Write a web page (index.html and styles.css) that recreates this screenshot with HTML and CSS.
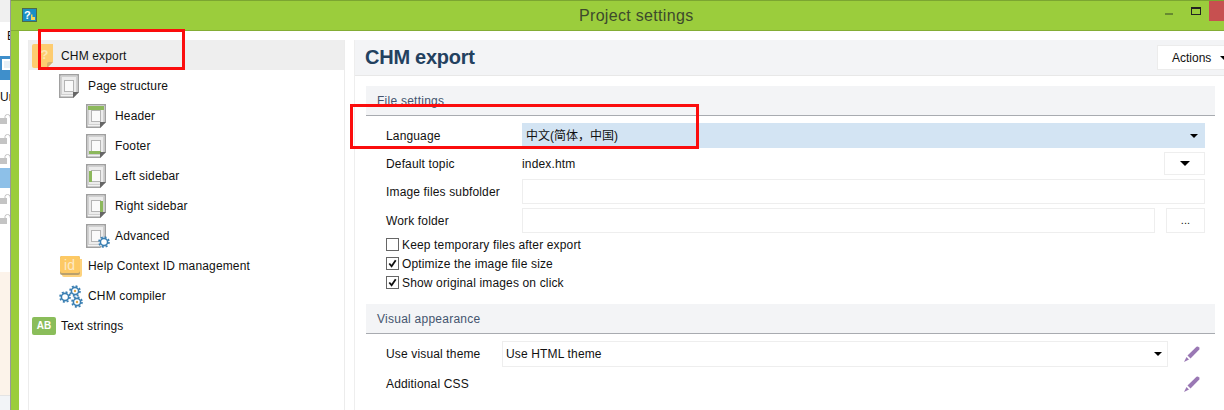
FILE: index.html
```html
<!DOCTYPE html>
<html lang="en">
<head>
<meta charset="utf-8">
<title>Project settings</title>
<link rel="stylesheet" href="styles.css">
</head>
<body>
<svg class="defs" aria-hidden="true">
  <symbol id="page" viewBox="0 0 20 24">
    <path d="M.75.75h18.500V18L14 23.250H.75z" fill="#f2f2f2" stroke="#a0a0a0" stroke-width="1.500"/>
    <rect x="2.500" y="2.500" width="15" height="18" fill="#ececec" stroke="#d0d0d0"/>
    <rect x="5.500" y="6.500" width="9" height="11" fill="#fafafa" stroke="#b4b4b4"/>
  </symbol>
  <symbol id="fold" viewBox="0 0 20 24">
    <path d="M14 24l6-6h-6z" fill="#666"/>
  </symbol>
  <symbol id="gear" viewBox="0 0 12 12">
    <circle cx="6" cy="6" r="5" fill="#fff"/>
    <circle cx="6" cy="6" r="3.600" fill="none" stroke="#3a7fb2" stroke-width="1.600"/>
    <circle cx="6" cy="6" r="5" fill="none" stroke="#3a7fb2" stroke-width="1.600" stroke-dasharray="2 1.930"/>
  </symbol>
  <symbol id="pen" viewBox="0 0 16 16">
    <path d="M3.500 9.500L12.500.8q1.400-.6 2.400.4t.4 2.400L6.500 12.500z" fill="#9a78b4"/>
    <path d="M2.500 11l2.500 2.500-5 2.500z" fill="#9a78b4"/>
  </symbol>
  <symbol id="lock" viewBox="0 0 11 10">
    <rect x="0" y="4" width="7" height="6" fill="#c4c4c4"/>
    <path d="M5 4V2.500Q5 .5 7.500.5T10 2.500V3.500" fill="none" stroke="#c4c4c4"/>
  </symbol>
</svg>

<div class="app">
  <div class="strip">
    <div class="strip-top"></div>
    <div class="strip-e">E</div>
    <div class="strip-blue"><span class="strip-doc"></span></div>
    <div class="strip-un">Un</div>
    <div class="strip-row"><svg class="lock"><use href="#lock"/></svg></div>
    <div class="strip-row"><svg class="lock"><use href="#lock"/></svg></div>
    <div class="strip-row"><svg class="lock"><use href="#lock"/></svg></div>
    <div class="strip-row strip-sel"></div>
    <div class="strip-row"><svg class="lock"><use href="#lock"/></svg></div>
    <div class="strip-row"><svg class="lock"><use href="#lock"/></svg></div>
    <div class="strip-peach"></div>
    <div class="strip-foot"></div>
  </div>

  <div class="window">
    <header class="titlebar">
      <svg class="app-icon" viewBox="0 0 15 14">
        <rect x=".5" y=".5" width="14" height="13" fill="#1b8fc4" stroke="#4d6b4a"/>
        <text x="2" y="10.500" class="app-q">?</text>
        <path d="M9 12V6.500h1.500V9H13v3z" fill="#f6d65a"/>
      </svg>
      <h1 class="title">Project settings</h1>
      <div class="controls">
        <span class="ctl-min"></span>
        <span class="ctl-max"></span>
        <span class="ctl-close"></span>
      </div>
    </header>

    <div class="winbody">
      <nav class="sidebar">
        <div class="item active">
          <span class="icon">
            <svg class="i-note" viewBox="0 0 21 24">
              <path d="M2 0h19v18l-6 6H2q-2 0-2-2V2q0-2 2-2z" fill="#fdcc70"/>
              <path d="M15 24v-4q0-2 2-2h4z" fill="#d4b070"/>
              <text x="8.500" y="15" class="i-q">?</text>
            </svg>
          </span>CHM export
        </div>
        <div class="item lv1">
          <span class="icon"><svg class="i-page" viewBox="0 0 20 24"><use href="#page" width="20" height="24"/><use href="#fold" width="20" height="24"/></svg></span>Page structure
        </div>
        <div class="item lv2">
          <span class="icon"><svg class="i-page" viewBox="0 0 20 24"><use href="#page" width="20" height="24"/><rect x="2" y="2" width="16" height="4" fill="#8cb85c"/><use href="#fold" width="20" height="24"/></svg></span>Header
        </div>
        <div class="item lv2">
          <span class="icon"><svg class="i-page" viewBox="0 0 20 24"><use href="#page" width="20" height="24"/><rect x="3" y="17" width="12" height="3" fill="#8cb85c"/><use href="#fold" width="20" height="24"/></svg></span>Footer
        </div>
        <div class="item lv2">
          <span class="icon"><svg class="i-page" viewBox="0 0 20 24"><use href="#page" width="20" height="24"/><rect x="3" y="7" width="3" height="11" fill="#8cb85c"/><use href="#fold" width="20" height="24"/></svg></span>Left sidebar
        </div>
        <div class="item lv2">
          <span class="icon"><svg class="i-page" viewBox="0 0 20 24"><use href="#page" width="20" height="24"/><rect x="14" y="7" width="3" height="11" fill="#8cb85c"/><use href="#fold" width="20" height="24"/></svg></span>Right sidebar
        </div>
        <div class="item lv2">
          <span class="icon"><svg class="i-page i-over" viewBox="0 0 20 24"><use href="#page" width="20" height="24"/><use href="#gear" x="12" y="12" width="12" height="12"/></svg></span>Advanced
        </div>
        <div class="item lv1">
          <span class="icon">
            <svg class="i-id" viewBox="0 0 22 21">
              <path d="M2 3h20v16q0 2-2 2H4q-2 0-2-2z" fill="#fdd27d"/>
              <path d="M2 0h16q2 0 2 2v15q0 2-2 2H2q-2 0-2-2V2q0-2 2-2z" fill="#b9a06c"/>
              <path d="M2 0h16q2 0 2 2v13q0 2-2 2H2q-2 0-2-2V2q0-2 2-2z" fill="#fdc964"/>
              <text x="4" y="14" class="i-idt">id</text>
            </svg>
          </span>Help Context ID management
        </div>
        <div class="item lv1">
          <span class="icon">
            <svg class="i-gears" viewBox="0 0 24 24">
              <use href="#gear" x="0" y="7" width="12" height="12"/>
              <use href="#gear" x="10" y="1" width="12" height="12"/>
              <use href="#gear" x="12" y="12" width="12" height="12"/>
              <circle cx="16" cy="7" r="1.200" fill="#e0a848"/>
              <circle cx="18" cy="18" r="1.200" fill="#e0a848"/>
            </svg>
          </span>CHM compiler
        </div>
        <div class="item">
          <span class="icon">
            <span class="i-ab">AB</span>
          </span>Text strings
        </div>
      </nav>

      <main class="main">
        <div class="main-head">
          <h2 class="heading">CHM export</h2>
          <div class="actions">Actions<span class="caret"></span></div>
        </div>

        <section class="section first">
          <h3 class="section-head">File settings</h3>
          <div class="form">
            <div class="row">
              <label class="label">Language</label>
              <div class="lang-value">中文(简体，中国)<span class="caret"></span></div>
            </div>
            <div class="row r-topic">
              <label class="label">Default topic</label>
              <span class="plain">index.htm</span>
              <span class="btn btn-drop"><span class="caret caret-lg"></span></span>
            </div>
            <div class="row">
              <label class="label">Image files subfolder</label>
              <span class="input"></span>
            </div>
            <div class="row">
              <label class="label">Work folder</label>
              <span class="input"></span>
              <span class="btn btn-more">...</span>
            </div>
          </div>
          <div class="checks">
            <div class="check"><span class="box"></span>Keep temporary files after export</div>
            <div class="check"><span class="box on"><svg viewBox="0 0 12 12"><path d="M2.500 6l2.500 3 4.500-6.500" fill="none" stroke="#111" stroke-width="2"/></svg></span>Optimize the image file size</div>
            <div class="check"><span class="box on"><svg viewBox="0 0 12 12"><path d="M2.500 6l2.500 3 4.500-6.500" fill="none" stroke="#111" stroke-width="2"/></svg></span>Show original images on click</div>
          </div>
        </section>

        <section class="section">
          <h3 class="section-head">Visual appearance</h3>
          <div class="form form-visual">
            <div class="row r-theme">
              <label class="label label-sm">Use visual theme</label>
              <div class="select">Use HTML theme<span class="caret"></span></div>
              <svg class="pen"><use href="#pen"/></svg>
            </div>
            <div class="row r-css">
              <label class="label">Additional CSS</label>
              <svg class="pen pen-end"><use href="#pen"/></svg>
            </div>
          </div>
        </section>
      </main>
    </div>
  </div>

  <div class="mark mark-a"></div>
  <div class="mark mark-b"></div>
</div>
</body>
</html>
```

FILE: styles.css
```css
* { box-sizing: border-box; }
html, body { margin: 0; padding: 0; height: 410px; overflow: hidden; }
body { font: 12px/1.2 "Liberation Sans", "Noto Sans CJK SC", sans-serif; letter-spacing: .15px; color: #111; background: #fff; }
h1, h2, h3 { margin: 0; font-weight: normal; }
.defs { position: absolute; width: 0; height: 0; }

.app { position: relative; display: flex; width: 1224px; height: 410px; overflow: hidden; }

/* background window peeking out on the left */
.strip { flex: none; width: 11px; height: 410px; overflow: hidden; display: flex; flex-direction: column; background: #fff; border-right: 1px solid #999; letter-spacing: 0; }
.strip-top { height: 22px; background: #f0f0f0; }
.strip-e { height: 28px; line-height: 28px; padding-left: 7px; font-size: 12px; margin-bottom: 6px; }
.strip-blue { height: 24px; background: #3f8fcb; padding: 3px 0 0 2px; }
.strip-doc { display: block; width: 12px; height: 11px; background: #e8f0f6; border: 2px solid #fff; }
.strip-un { height: 28px; line-height: 34px; font-size: 12px; white-space: nowrap; }
.strip-row { flex: none; height: 20px; padding-top: 6px; }
.strip-sel { background: #8dc0e8; }
.lock { display: block; width: 11px; height: 10px; }
.strip-peach { height: 123px; margin-top: auto; flex: none; background: #fcf3ea; }
.strip-foot { height: 15px; flex: none; background: #f2f4f7; border-top: 1px solid #e4e4e4; }

/* window */
.window { flex: none; width: 1213px; display: flex; flex-direction: column; }
.titlebar { flex: none; height: 31px; display: flex; align-items: flex-start; background: #9bcd3c; border-top: 1px solid #7ba531; border-bottom: 1px solid #84ad35; }
.app-icon { flex: none; width: 15px; height: 14px; margin: 7px 0 0 11px; }
.app-q { font: bold 11px "Liberation Sans", sans-serif; fill: #fff; }
.title { flex: none; width: 114px; margin: 7px 0 0 542px; font-size: 16px; line-height: 16px; letter-spacing: .32px; white-space: nowrap; color: #3d4a2c; }
.controls { margin-left: auto; display: flex; align-items: flex-start; }
.ctl-min { width: 8px; height: 2px; margin: 12px 18px 0 0; background: #678a30; }
.ctl-max { width: 10px; height: 8px; margin: 6px 8px 0 0; border: 1px solid #222; border-top-width: 2px; }
.ctl-close { width: 15px; height: 20px; background: #c75050; }

.winbody { flex: 1; min-height: 0; display: flex; background: #fff; border-left: 8px solid #9bcd3c; padding: 9px 0 0 9px; }

/* tree */
.sidebar { flex: none; width: 317px; border: 1px solid #ececec; border-width: 0 1px; }
.item { height: 30px; display: flex; align-items: center; padding: 2px 0 0 3px; white-space: nowrap; }
.item.active { background: #eeeeee; }
.item.lv1 { padding-left: 30px; }
.item.lv2 { padding-left: 57px; }
.icon { flex: none; width: 29px; display: flex; align-items: center; }
.i-note { width: 21px; height: 24px; }
.i-q { font: bold 13px "Liberation Sans", sans-serif; fill: #fde6b4; }
.i-page { display: block; width: 20px; height: 24px; }
.i-over { overflow: visible; }
.i-id { width: 22px; height: 21px; margin-left: 1px; }
.i-idt { font: 14px "Liberation Sans", sans-serif; fill: #fdeac4; }
.i-gears { width: 24px; height: 24px; }
.i-ab { display: block; width: 24px; height: 18px; line-height: 18px; text-align: center; background: #8abd5a; color: #fff; font-weight: bold; font-size: 10px; letter-spacing: 0; border-radius: 2px; }

/* main */
.main { flex: 1; min-width: 0; margin-left: 9px; border-left: 1px solid #eee; }
.main-head { height: 36px; display: flex; align-items: flex-start; background: #f3f4f6; border-bottom: 1px solid #e8e8e8; padding-left: 10px; }
.heading { font-size: 20px; line-height: 35px; font-weight: bold; color: #23415f; letter-spacing: -.25px; }
.actions { flex: none; margin: 5px 0 0 auto; width: 67px; height: 25px; line-height: 24px; padding-left: 14px; background: #fff; border: 1px solid #ececec; border-right: 0; white-space: nowrap; display: flex; align-items: center; letter-spacing: 0; }
.actions .caret { margin-left: 9px; }

.section { margin: 0 9px 0 11px; }
.section.first { margin-top: 10px; }
.section-head { height: 30px; line-height: 31px; padding-left: 11px; font-size: 12px; color: #44546e; background: #f3f4f6; border-bottom: 1px solid #a8abb0; letter-spacing: .25px; }

.form { padding: 7px 10px 0 20px; display: flex; flex-direction: column; gap: 4px; }
.row { height: 25px; display: flex; align-items: center; }
.r-topic { height: 23px; }
.label { flex: none; width: 136px; white-space: nowrap; }
.first .label, .first .plain { padding-top: 2px; }
.label-sm { width: 116px; }
.lang-value { flex: 1; height: 25px; display: flex; align-items: center; padding: 2px 0 0 4px; background: #d3e4f3; letter-spacing: 0; }
.lang-value .caret { margin: -2px 7px 0 auto; }
.plain { flex: 1; }
.input { flex: 1; height: 25px; border: 1px solid #eee; background: #fff; }
.btn { flex: none; display: flex; align-items: center; justify-content: center; border: 1px solid #eee; background: #fff; }
.btn-drop { width: 41px; height: 23px; }
.btn-more { width: 39px; height: 25px; margin-left: 11px; font-size: 11px; }
.caret { display: block; flex: none; width: 0; height: 0; border: 4px solid transparent; border-bottom: 0; border-top: 4px solid #000; }
.caret-lg { border-width: 5px 5px 0; }

.checks { margin: 2px 0 12px 20px; }
.check { height: 19px; display: flex; align-items: flex-start; line-height: 21px; white-space: nowrap; }
.box { flex: none; width: 13px; height: 13px; margin: 3px 3px 0 0; border: 1px solid #666; background: #fff; }
.box svg { display: block; width: 11px; height: 11px; }

.form-visual { gap: 4px; }
.r-theme { height: 26px; }
.r-css { height: 26px; }
.select { width: 666px; height: 26px; display: flex; align-items: center; padding-left: 3px; border: 1px solid #eee; }
.select .caret { margin-left: auto; margin-right: 5px; }
.pen { flex: none; width: 16px; height: 16px; margin-left: 16px; }
.pen-end { margin-left: 662px; }

/* red annotation rectangles drawn over the screenshot */
.mark { position: absolute; border: 3px solid #fb0d0d; }
.mark-a { left: 38px; top: 29px; width: 147px; height: 41px; }
.mark-b { left: 350px; top: 104px; width: 349px; height: 45px; }
```
